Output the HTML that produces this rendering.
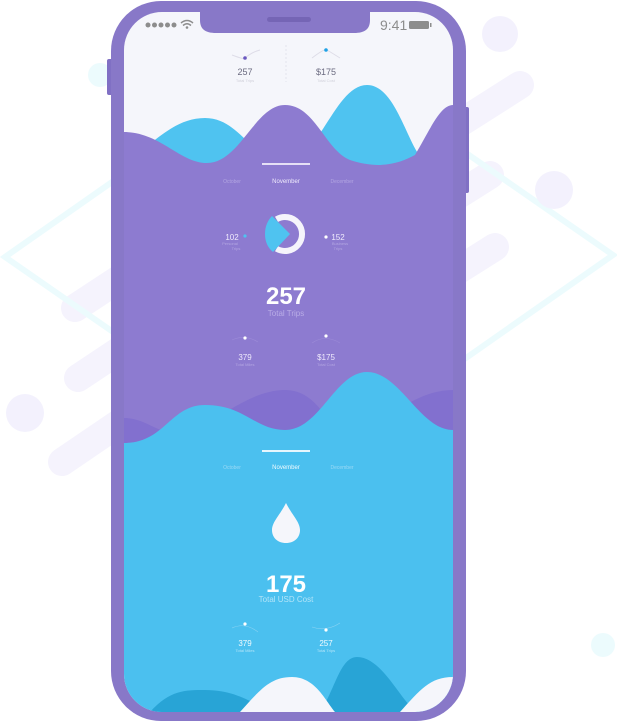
<!DOCTYPE html>
<html><head><meta charset="utf-8"><style>
html,body{margin:0;padding:0;background:#fff;width:617px;height:723px;overflow:hidden}
svg{display:block}
text{font-family:"Liberation Sans",sans-serif}
</style></head><body>
<svg width="617" height="723" viewBox="0 0 617 723" xmlns="http://www.w3.org/2000/svg">
<defs>
<clipPath id="scr"><rect x="124" y="12" width="329" height="700" rx="38"/></clipPath>
</defs>
<g stroke="#f5f3fd" stroke-width="28" stroke-linecap="round" fill="none">
<line x1="520" y1="85" x2="300" y2="225"/>
<line x1="490" y1="175" x2="300" y2="295"/>
<line x1="495" y1="247" x2="300" y2="370"/>
<line x1="75" y1="308" x2="300" y2="160"/>
<line x1="78" y1="378" x2="300" y2="230"/>
<line x1="62" y1="462" x2="300" y2="300"/>
</g>
<polygon points="5,257 309,44 613,255 309,468" fill="none" stroke="#ecfbfd" stroke-width="6"/>
<circle cx="500" cy="34" r="18" fill="#f3f1fd"/>
<circle cx="554" cy="190" r="19" fill="#f3f1fd"/>
<circle cx="25" cy="413" r="19" fill="#f3f1fd"/>
<circle cx="100" cy="75" r="12" fill="#ecfbfd"/>
<circle cx="603" cy="645" r="12" fill="#ecfbfd"/>
<rect x="107" y="59" width="6" height="36" rx="2" fill="#8070c4"/>
<rect x="463" y="107" width="6" height="86" rx="2" fill="#8070c4"/>
<rect x="111" y="1" width="355" height="720" rx="50" fill="#8878c8"/>
<g clip-path="url(#scr)">
<rect x="124" y="12" width="329" height="700" fill="#f5f6fb"/>
<path d="M124,160 C150,150 170,118 205,118 C240,118 250,160 285,160 C320,160 335,85 367,85 C400,85 410,163 430,163 C440,163 445,155 453,150 L453,200 L124,200Z" fill="#4fc3f0"/>
<path d="M124,132 C160,132 180,163 207,163 C240,163 255,105 285,105 C315,105 325,150 350,160 C380,170 400,163 415,155 C430,130 440,105 453,105 L453,480 L124,480Z" fill="#8d7bd0"/>
<path d="M124,418 C150,418 160,440 190,430 C220,420 250,390 285,390 C320,390 325,430 350,430 C380,430 410,390 453,390 L453,480 L124,480Z" fill="#8270cf"/>
<path d="M124,443 C165,443 170,405 205,405 C245,405 255,430 285,430 C320,430 335,372 367,372 C400,372 420,430 453,430 L453,712 L124,712Z" fill="#4bc0ef"/>
<path d="M150,712 C170,690 185,690 205,690 C245,690 260,712 280,712Z" fill="#28a4d6"/>
<path d="M320,712 C335,690 340,657 357,657 C385,657 405,712 420,712Z" fill="#28a4d6"/>
<path d="M240,712 C260,690 270,677 292,677 C315,677 325,700 335,712Z" fill="#f5f6fb"/>
<path d="M400,712 C420,690 430,677 453,677 L453,712Z" fill="#f5f6fb"/>
</g>
<path d="M200,10 L200,20 C200,29 205,33 216,33 L354,33 C365,33 370,29 370,20 L370,10Z" fill="#8878c8"/>
<rect x="267" y="17" width="44" height="5" rx="2.5" fill="#7565b5"/>
<g fill="#8d8d8d">
<circle cx="148" cy="25" r="2.5"/><circle cx="154.5" cy="25" r="2.5"/><circle cx="161" cy="25" r="2.5"/><circle cx="167.5" cy="25" r="2.5"/><circle cx="174" cy="25" r="2.5"/>
<rect x="409" y="21" width="20" height="8" rx="1.5"/><rect x="430" y="23" width="1.5" height="4"/>
</g>
<path d="M181,23 Q187,18 193,23 M183,25.5 Q187,22 191,25.5" stroke="#8d8d8d" stroke-width="1.5" fill="none"/>
<circle cx="187" cy="27.5" r="1.3" fill="#8d8d8d"/>
<text x="380" y="30" font-size="14" fill="#8d8d8d">9:41</text>
<line x1="286" y1="45" x2="286" y2="82" stroke="#e4e4ee" stroke-dasharray="2 2"/>
<path d="M232,55 Q245,60 245,58 Q252,52 260,50" stroke="#dedde8" fill="none"/>
<circle cx="245" cy="58" r="1.8" fill="#6a58c0"/>
<path d="M312,58 Q325,48 327,50 Q332,53 340,58" stroke="#dedde8" fill="none"/>
<circle cx="326" cy="50" r="1.8" fill="#1fa2e6"/>
<g text-anchor="middle">
<text x="245" y="75" font-size="9" fill="#6b6b80">257</text>
<text x="245" y="82" font-size="4" fill="#d0d0da">Total Trips</text>
<text x="326" y="75" font-size="9" fill="#6b6b80">$175</text>
<text x="326" y="82" font-size="4" fill="#d0d0da">Total Cost</text>
<rect x="262" y="163" width="48" height="2" fill="#e6e0f6"/>
<text x="232" y="183" font-size="5" fill="#b3a6e2">October</text>
<text x="286" y="183" font-size="6" fill="#efeafc">November</text>
<text x="342" y="183" font-size="5" fill="#b3a6e2">December</text>
<text x="232" y="240" font-size="8" fill="#efeafc">102</text>
<text x="230" y="245" font-size="4" fill="#b3a6e2">Personal</text>
<text x="236" y="250" font-size="4" fill="#b3a6e2">Trips</text>
<text x="338" y="240" font-size="8" fill="#efeafc">152</text>
<text x="340" y="245" font-size="4" fill="#b3a6e2">Business</text>
<text x="338" y="250" font-size="4" fill="#b3a6e2">Trips</text>
<text x="286" y="304" font-size="24" font-weight="bold" fill="#fff">257</text>
<text x="286" y="316" font-size="8" fill="#b9ace6">Total Trips</text>
<text x="245" y="360" font-size="8" fill="#efeafc">379</text>
<text x="245" y="366" font-size="4" fill="#b3a6e2">Total Miles</text>
<text x="326" y="360" font-size="8" fill="#efeafc">$175</text>
<text x="326" y="366" font-size="4" fill="#b3a6e2">Total Cost</text>
<rect x="262" y="450" width="48" height="2" fill="#e6f6fd"/>
<text x="232" y="469" font-size="5" fill="#9ad9f5">October</text>
<text x="286" y="469" font-size="6" fill="#f0fafe">November</text>
<text x="342" y="469" font-size="5" fill="#9ad9f5">December</text>
<text x="286" y="592" font-size="24" font-weight="bold" fill="#fff">175</text>
<text x="286" y="602" font-size="8" fill="#b2e4f8">Total USD Cost</text>
<text x="245" y="646" font-size="8" fill="#f0fafe">379</text>
<text x="245" y="652" font-size="4" fill="#b2e4f8">Total Miles</text>
<text x="326" y="646" font-size="8" fill="#f0fafe">257</text>
<text x="326" y="652" font-size="4" fill="#b2e4f8">Total Trips</text>
</g>
<circle cx="245" cy="236" r="1.6" fill="#4fc3f0"/>
<circle cx="326" cy="237" r="1.6" fill="#fff"/>
<path d="M276.5,219.3 A17,17 0 1 1 276.5,248.7" fill="none" stroke="#f5f4fb" stroke-width="6"/>
<path d="M272,216 L290,234 L273,252 C268,248 265,242 265,234 C265,226 268,220 272,216Z" fill="#4fc3f0"/>
<path d="M232,340 Q245,334 258,342" stroke="#9c8bd8" fill="none" stroke-width="0.6"/>
<circle cx="245" cy="338" r="1.6" fill="#fff"/>
<path d="M312,343 Q325,334 340,343" stroke="#9c8bd8" fill="none" stroke-width="0.6"/>
<circle cx="326" cy="336" r="1.6" fill="#fff"/>
<path d="M232,628 Q245,622 258,632" stroke="#8ad3f3" fill="none" stroke-width="0.6"/>
<circle cx="245" cy="624" r="1.6" fill="#fff"/>
<path d="M312,627 Q326,632 340,623" stroke="#8ad3f3" fill="none" stroke-width="0.6"/>
<circle cx="326" cy="630" r="1.6" fill="#fff"/>
<path d="M286,503 C280,515 272,522 272,530 C272,538 278,543 286,543 C294,543 300,538 300,530 C300,522 292,515 286,503Z" fill="#f5f6fb"/>
</svg>
</body></html>
